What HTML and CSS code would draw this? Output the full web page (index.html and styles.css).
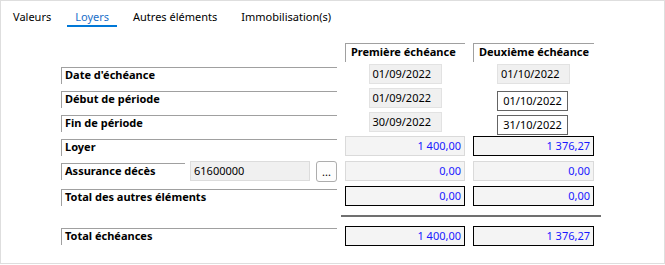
FILE: index.html
```html
<!DOCTYPE html>
<html lang="fr">
<head>
    <meta charset="UTF-8">
    <title>Loyers</title>
    <link rel="stylesheet" href="styles.css">
</head>
<body>
    <div class="panel">
        <nav class="tabs">
            <span class="tab">Valeurs</span>
            <span class="tab active">Loyers</span>
            <span class="tab">Autres éléments</span>
            <span class="tab">Immobilisation(s)</span>
        </nav>

        <div class="row head-row">
            <div></div>
            <div class="col-head">Première échéance</div>
            <div class="col-head">Deuxième échéance</div>
        </div>

        <div class="row first">
            <div class="label">Date d'échéance</div>
            <div class="cell"><div class="date">01/09/2022</div></div>
            <div class="cell"><div class="date">01/10/2022</div></div>
        </div>
        <div class="row">
            <div class="label">Début de période</div>
            <div class="cell"><div class="date">01/09/2022</div></div>
            <div class="cell"><div class="date edit">01/10/2022</div></div>
        </div>
        <div class="row">
            <div class="label">Fin de période</div>
            <div class="cell"><div class="date">30/09/2022</div></div>
            <div class="cell"><div class="date edit">31/10/2022</div></div>
        </div>

        <div class="row money">
            <div class="label">Loyer</div>
            <div class="amount">1 400,00</div>
            <div class="amount strong">1 376,27</div>
        </div>
        <div class="row money">
            <div class="label-group">
                <div class="label short">Assurance décès</div>
                <div class="code">61600000</div>
                <button class="dots">...</button>
            </div>
            <div class="amount">0,00</div>
            <div class="amount">0,00</div>
        </div>
        <div class="row money">
            <div class="label">Total des autres éléments</div>
            <div class="amount strong">0,00</div>
            <div class="amount strong">0,00</div>
        </div>

        <div class="separator"></div>

        <div class="row money total">
            <div class="label">Total échéances</div>
            <div class="amount strong">1 400,00</div>
            <div class="amount strong">1 376,27</div>
        </div>
    </div>
</body>
</html>
```

FILE: styles.css
```css
body {
    margin: 0;
    font-family: "Noto Sans", "Segoe UI", sans-serif;
    font-size: 11px;
    color: #000;
    background-color: #fff;
}
.panel {
    width: 665px;
    height: 264px;
    box-sizing: border-box;
    border: 1px solid #dedede;
}
.tabs {
    display: flex;
    gap: 8px;
    padding: 7px 0 0 4px;
}
.tab {
    padding: 0 8px;
    line-height: 17px;
    border-bottom: 2px solid transparent;
}
.tab.active {
    color: #1a6fc9;
    border-bottom-color: #0078d7;
}
.row {
    display: grid;
    grid-template-columns: 276px 120px 121px;
    column-gap: 8px;
    margin-left: 60px;
    height: 24px;
}
.head-row {
    margin-top: 16px;
    height: 21px;
}
.col-head {
    height: 18px;
    padding-left: 5px;
    border-top: 1px solid #a0a0a0;
    border-left: 1px solid #a0a0a0;
    font-weight: bold;
    line-height: 15px;
}
.label {
    margin-top: 3px;
    height: 16px;
    padding-left: 3px;
    border-top: 1px solid #a0a0a0;
    border-left: 1px solid #a0a0a0;
    font-weight: bold;
    line-height: 14px;
}
.cell {
    display: flex;
    justify-content: center;
}
.date {
    width: 73px;
    height: 20px;
    box-sizing: border-box;
    padding-left: 3px;
    background-color: #f0f0f0;
    border: 1px solid #e2e2e2;
    line-height: 18px;
}
.date.edit {
    width: 71px;
    margin: 3px 2px 0 0;
    padding-left: 0;
    text-align: center;
    background-color: #fff;
    border-color: #646464;
}
.row.money {
    height: 25px;
}
.amount {
    height: 20px;
    box-sizing: border-box;
    padding-right: 3px;
    background-color: #f4f4f4;
    border: 1px solid #dadada;
    color: #1818ff;
    text-align: right;
    line-height: 18px;
}
.amount.strong {
    border-color: #000;
}
.label-group {
    display: flex;
    align-items: flex-start;
}
.label.short {
    width: 120px;
    margin-top: 2px;
}
.code {
    width: 120px;
    height: 20px;
    box-sizing: border-box;
    margin-left: 5px;
    padding-left: 3px;
    background-color: #f0f0f0;
    border: 1px solid #dcdcdc;
    line-height: 18px;
}
.dots {
    width: 21px;
    height: 21px;
    margin-left: 6px;
    padding: 0;
    font-family: inherit;
    font-size: 11px;
    line-height: 16px;
    background-color: #fdfdfd;
    border: 1px solid #adadad;
    border-radius: 3px;
}
.separator {
    width: 260px;
    height: 2px;
    margin: 4px 0 0 340px;
    background-color: #707070;
}
.total {
    margin-top: 9px;
}
.total .label {
    margin-top: 2px;
}
```
